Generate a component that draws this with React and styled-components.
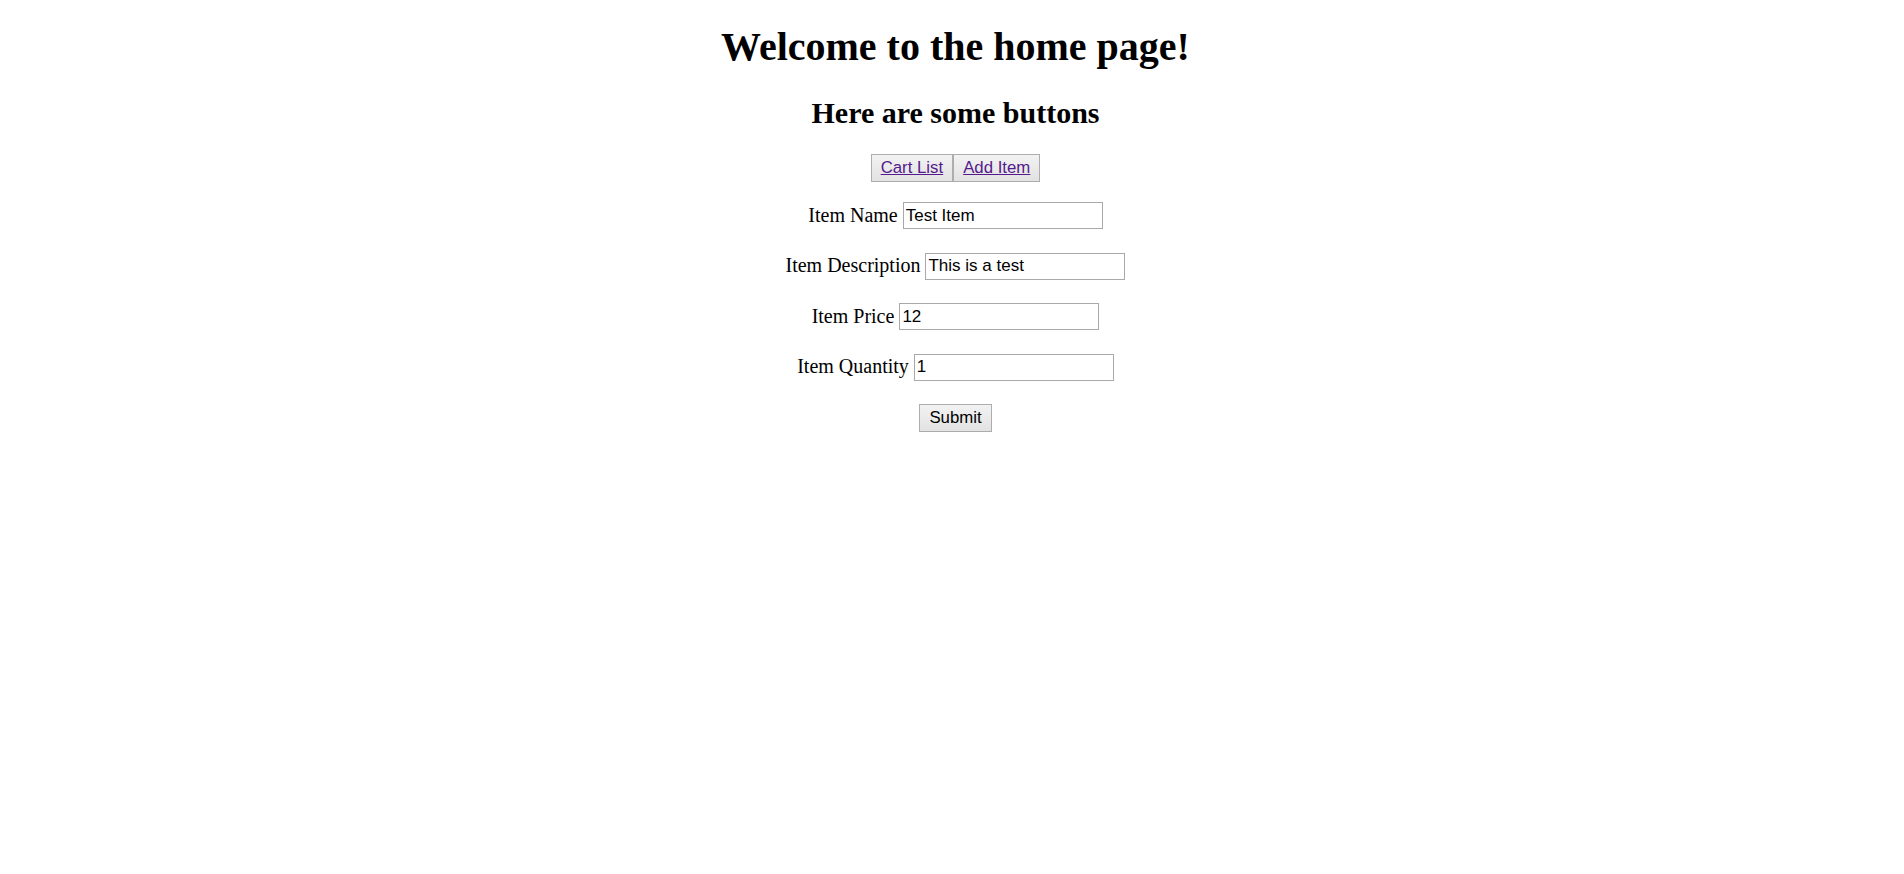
import React from 'react'
import styled, { createGlobalStyle } from "styled-components";

const GlobalStyle = createGlobalStyle`
  body {
    margin: 0;
    background: #fff;
    color: #000;
    font-family: "Liberation Serif", "Times New Roman", serif;
  }
`

const Page = styled.div`
  display: flex;
  flex-direction: column;
  align-items: center;
  padding: 25px 0 0 7px;
  text-align: center;
`
const Title = styled.h1`
  margin: 0;
  font-size: 40px;
  line-height: 44px;
  font-weight: bold;
`
const Subtitle = styled.h2`
  margin: 27px 0 0;
  font-size: 30px;
  line-height: 34px;
  font-weight: bold;
`
const ButtonBar = styled.div`
  display: flex;
  margin-top: 24px;
`
const Button = styled.button`
  height: 28px;
  padding: 0 9px;
  border: 1px solid #adadad;
  background: linear-gradient(#f2f2f2, #e2e2e2);
  font-family: "Liberation Sans", Arial, sans-serif;
  font-size: 16.8px;
  color: #000;
  cursor: pointer;
`
const NavLink = styled.a`
  color: #551a8b;
  text-decoration: underline;
`
const Form = styled.form`
  display: flex;
  flex-direction: column;
  align-items: center;
  gap: 23.5px;
  margin-top: 20px;
`
const Row = styled.div`
  display: flex;
  align-items: baseline;
  gap: 5px;
  height: 27px;
`
const Label = styled.label`
  font-size: 20px;
  position: relative;
  top: 1px;
`
const Input = styled.input`
  box-sizing: border-box;
  width: 200px;
  height: 27px;
  padding: 1px 2px;
  border: 1px solid #a9a9a9;
  font-family: "Liberation Sans", Arial, sans-serif;
  font-size: 17px;
  color: #000;
  outline: none;
`

const fields = [
  { label: "Item Name", value: "Test Item" },
  { label: "Item Description", value: "This is a test" },
  { label: "Item Price", value: "12" },
  { label: "Item Quantity", value: "1" },
]

const App = () => {
  return (
    <>
      <GlobalStyle />
      <Page>
        <Title>Welcome to the home page!</Title>
        <Subtitle>Here are some buttons</Subtitle>
        <ButtonBar>
          <Button><NavLink href="#cart">Cart List</NavLink></Button>
          <Button><NavLink href="#add">Add Item</NavLink></Button>
        </ButtonBar>
        <Form onSubmit={e => e.preventDefault()}>
          {fields.map(f => (
            <Row key={f.label}>
              <Label>{f.label}</Label>
              <Input type="text" defaultValue={f.value} />
            </Row>
          ))}
          <Button type="submit">Submit</Button>
        </Form>
      </Page>
    </>
  )
}
export default App
